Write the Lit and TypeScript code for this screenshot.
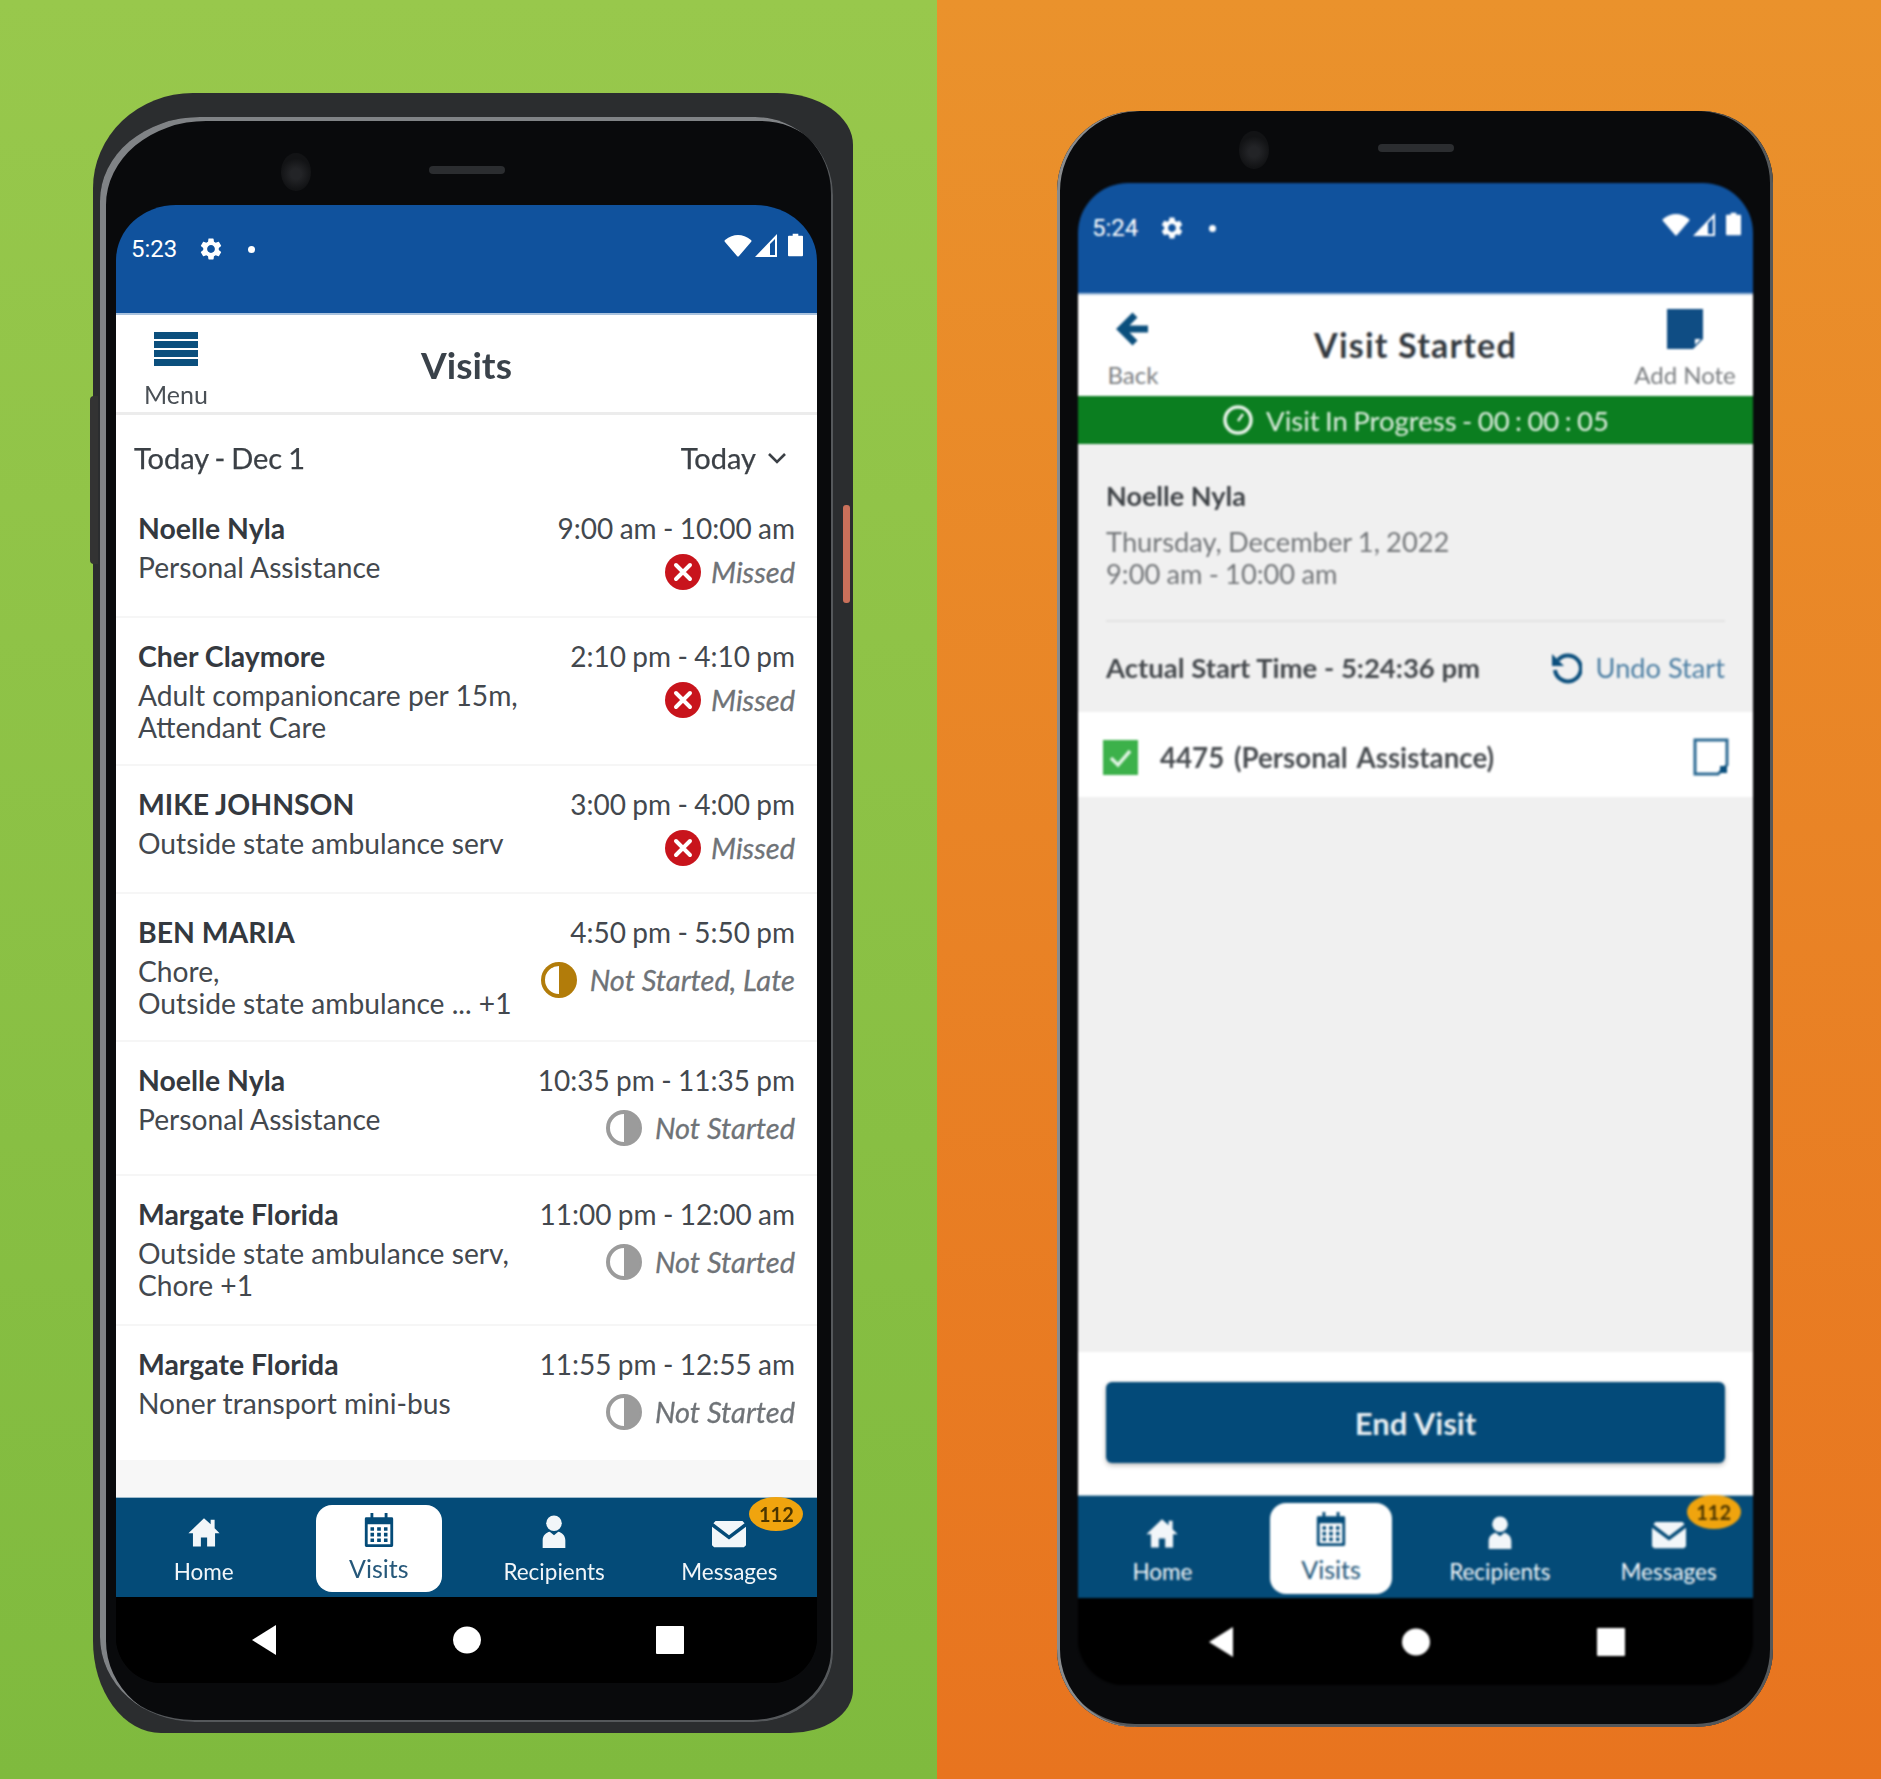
import { LitElement, html, css, svg } from "lit";
import { customElement, property } from "lit/decorators.js";

const gear = svg`<path d="M19.14 12.94c.04-.3.06-.61.06-.94 0-.32-.02-.64-.07-.94l2.03-1.58a.49.49 0 0 0 .12-.61l-1.92-3.32a.488.488 0 0 0-.59-.22l-2.39.96c-.5-.38-1.03-.7-1.62-.94l-.36-2.54a.484.484 0 0 0-.48-.41h-3.84c-.24 0-.43.17-.47.41l-.36 2.54c-.59.24-1.13.57-1.62.94l-2.39-.96c-.22-.08-.47 0-.59.22L2.74 8.87c-.12.21-.08.47.12.61l2.03 1.58c-.05.3-.09.63-.09.94s.02.64.07.94l-2.03 1.58a.49.49 0 0 0-.12.61l1.92 3.32c.12.22.37.29.59.22l2.39-.96c.5.38 1.03.7 1.62.94l.36 2.54c.05.24.24.41.48.41h3.84c.24 0 .44-.17.47-.41l.36-2.54c.59-.24 1.13-.56 1.62-.94l2.39.96c.22.08.47 0 .59-.22l1.92-3.32c.12-.22.07-.47-.12-.61l-2.01-1.58zM12 15.6c-1.98 0-3.6-1.62-3.6-3.6s1.62-3.6 3.6-3.6 3.6 1.62 3.6 3.6-1.62 3.6-3.6 3.6z"/>`;

@customElement("status-bar")
class StatusBar extends LitElement {
  @property() time = "";
  static styles = css`
    :host { display: flex; height: 100%; align-items: flex-start; color: #fff; font-family: Roboto, sans-serif; }
    .time { font-size: 24px; line-height: 32px; width: 47px; }
    .gear { width: 26px; height: 26px; fill: #fff; margin: 3px 0 0 20px; }
    .dot { width: 7px; height: 7px; border-radius: 50%; background: #fff; margin: 13px 0 0 24px; }
    .right { margin-left: auto; display: flex; gap: 2px; align-items: flex-start; }
    .wifi { width: 28px; height: 24px; fill: #fff; }
    .sig { width: 24px; height: 24px; fill: #fff; }
    .bat { width: 15px; height: 24px; fill: #fff; margin-left: 8px; }
  `;
  render() {
    return html`
      <span class="time">${this.time}</span>
      <svg class="gear" viewBox="0 0 24 24">${gear}</svg>
      <span class="dot"></span>
      <span class="right">
        <svg class="wifi" viewBox="0 0 28 24"><path d="M1 9Q0 8 1 7 14-3 27 7 28 8 27 9L15 23Q14 24 13 23Z"/></svg>
        <svg class="sig" viewBox="0 0 24 24"><path fill-rule="evenodd" d="M23 1V24H1ZM21 6 16 11V22H21Z"/></svg>
        <svg class="bat" viewBox="0 0 16 24"><path d="M5 0h6v2h4a1 1 0 0 1 1 1v20a1 1 0 0 1-1 1H1a1 1 0 0 1-1-1V3a1 1 0 0 1 1-1h4z"/></svg>
      </span>`;
  }
}

@customElement("bottom-nav")
class BottomNav extends LitElement {
  @property() variant = "a";
  static styles = css`
    :host { display: block; font-family: Lato, sans-serif; flex: none; }
    .bar { display: grid; grid-template-columns: repeat(4, 1fr); background: #044b78; border-top: 1px solid #9fbccd; box-sizing: border-box; justify-items: center; }
    .a .bar { height: 100px; padding-top: 7px; }
    .b .bar { height: 103px; padding-top: 7px; }
    .tab { position: relative; border-radius: 16px; box-sizing: border-box; display: flex; flex-direction: column; align-items: center; color: #f2f6f9; }
    .a .tab { width: 126px; height: 87px; padding-top: 8px; }
    .b .tab { width: 122px; height: 91px; padding-top: 11px; }
    .a .tab.on { padding-top: 7px; }
    .b .tab.on { padding-top: 8px; }
    .tab.on { background: #fff; color: #26587a; }
    .tab svg { width: 34px; height: 36px; fill: currentColor; display: block; }
    .tab.on svg { fill: #044b78; }
    .tab span { font-size: 22.500px; line-height: 28px; white-space: nowrap; }
    .a .tab span { margin-top: 9px; }
    .b .tab span { margin-top: 8px; }
    .a .tab.on span { margin-top: 6px; }
    .tab.on span { font-size: 25px; }
    .badge { position: absolute; right: -11px; top: -8px; width: 54px; height: 34px; border-radius: 50%; background: #f0a40e; color: #4a3500; font-size: 20px; font-weight: 700; line-height: 34px; text-align: center; }
    .keys { display: grid; justify-content: center; justify-items: center; align-items: center; background: #000; box-sizing: border-box; }
    .a .keys { grid-template-columns: repeat(3, 203px); height: 86px; }
    .b .keys { grid-template-columns: repeat(3, 195px); height: 87px; }
    .keys svg { width: 28px; height: 30px; fill: #fff; display: block; }
  `;
  render() {
    return html`
      <div class=${this.variant}>
        <div class="bar">
          <div class="tab">
            <svg viewBox="0 0 24 24"><path d="M12 3 1 13.5h3.2V23h5.6v-6.5h4.4V23h5.6v-9.500H23L19.500 10V4h-2.800v3.300Z"/></svg>
            <span>Home</span>
          </div>
          <div class="tab on">
            <svg viewBox="0 0 24 24"><path fill-rule="evenodd" d="M6 0h2v3h8V0h2v3h3a1 1 0 0 1 1 1v19a1 1 0 0 1-1 1H3a1 1 0 0 1-1-1V4a1 1 0 0 1 1-1h3zM4 8v14h16V8zM6 10h2.500v2.500H6zm4.700 0h2.600v2.500h-2.600zm4.800 0H18v2.500h-2.500zM6 14h2.500v2.500H6zm4.700 0h2.600v2.500h-2.600zm4.800 0H18v2.500h-2.500zM6 18h2.500v2.500H6zm4.700 0h2.600v2.500h-2.600zm4.800 0H18v2.500h-2.500z"/></svg>
            <span>Visits</span>
          </div>
          <div class="tab">
            <svg viewBox="0 0 24 24"><circle cx="12" cy="6.500" r="5.500"/><path d="M4 24v-5.500C4 15 6.500 13 9 12.500l3 2.500 3-2.500c2.500.5 5 2.500 5 6V24Z"/></svg>
            <span>Recipients</span>
          </div>
          <div class="tab">
            <svg viewBox="0 0 24 24"><path d="M1 5.500 2.500 4h19L23 5.500 12 14ZM0 8l12 9 12-9v13l-1.500 1.500h-21L0 21Z" transform="translate(0 1)"/></svg>
            <span>Messages</span>
            <div class="badge">112</div>
          </div>
        </div>
        <div class="keys">
          <svg viewBox="0 0 28 30"><path d="M26 0V30L2 15Z"/></svg>
          <svg viewBox="0 0 28 30"><ellipse cx="14" cy="15" rx="14" ry="13.500"/></svg>
          <svg viewBox="0 0 28 30"><rect y="1" width="28" height="28" rx="1"/></svg>
        </div>
      </div>`;
  }
}

interface Visit { name: string; sub: string[]; time: string; status: "missed" | "late" | "none"; h: number; }

const visits: Visit[] = [
  { name: "Noelle Nyla", sub: ["Personal Assistance"], time: "9:00 am - 10:00 am", status: "missed", h: 128 },
  { name: "Cher Claymore", sub: ["Adult companioncare per 15m,", "Attendant Care"], time: "2:10 pm - 4:10 pm", status: "missed", h: 148 },
  { name: "MIKE JOHNSON", sub: ["Outside state ambulance serv"], time: "3:00 pm - 4:00 pm", status: "missed", h: 128 },
  { name: "BEN MARIA", sub: ["Chore,", "Outside state ambulance ... +1"], time: "4:50 pm - 5:50 pm", status: "late", h: 148 },
  { name: "Noelle Nyla", sub: ["Personal Assistance"], time: "10:35 pm - 11:35 pm", status: "none", h: 134 },
  { name: "Margate Florida", sub: ["Outside state ambulance serv,", "Chore +1"], time: "11:00 pm - 12:00 am", status: "none", h: 150 },
  { name: "Margate Florida", sub: ["Noner transport mini-bus"], time: "11:55 pm - 12:55 am", status: "none", h: 134 },
];

const statusLabel = { missed: "Missed", late: "Not Started, Late", none: "Not Started" };

@customElement("visits-screen")
class VisitsScreen extends LitElement {
  static styles = css`
    :host { display: block; font-family: Lato, sans-serif; color: #3b4046; }
    .head { height: 100px; background: #fff; border-bottom: 3px solid #ececec; box-sizing: border-box; display: grid; grid-template-columns: 1fr auto 1fr; align-items: center; }
    .menu { display: flex; flex-direction: column; align-items: center; width: 64px; margin-left: 28px; align-self: start; padding-top: 17px; color: #4a5056; font-size: 25px; line-height: 30px; }
    .menu svg { width: 44px; height: 34px; margin-bottom: 13px; }
    .title { font-size: 37px; font-weight: 700; color: #3a424a; padding-top: 2px; }
    .date { height: 75px; display: flex; align-items: center; justify-content: space-between; padding: 10px 30px 0 18px; font-size: 29px; word-spacing: -1.5px; background: #fff; box-sizing: border-box; -webkit-text-stroke: .25px #3b4046; }
    .today { display: flex; align-items: center; gap: 11px; }
    .today svg { width: 20px; height: 14px; }
    .rows { background: #fff; }
    .row { display: flex; justify-content: space-between; padding: 18px 22px 0 22px; border-bottom: 2px solid #f6f6f6; box-sizing: border-box; }
    .row:last-child { border-bottom: 0; }
    .name { font-size: 28.400px; line-height: 40px; font-weight: 700; color: #34393f; }
    .sub { font-size: 28.200px; line-height: 32px; margin-top: 3px; white-space: nowrap; color: #43484e; }
    .right { display: flex; flex-direction: column; align-items: flex-end; }
    .time { font-size: 28px; line-height: 40px; color: #43484e; word-spacing: -.8px; }
    .st { display: flex; align-items: center; gap: 13px; font-size: 29px; line-height: 40px; font-style: italic; color: #6f7377; margin-top: 8px; -webkit-text-stroke: .3px #6f7377; }
    .st.missed { margin-top: 4px; gap: 10px; }
    .st svg { width: 36px; height: 36px; display: block; }
    .foot { height: 37px; background: #f7f7f7; }
  `;
  icon(s: Visit["status"]) {
    if (s === "missed") {
      return html`<svg viewBox="0 0 36 36"><circle cx="18" cy="18" r="18" fill="#c8141c"/><path d="M11 11 25 25M25 11 11 25" stroke="#fff" stroke-width="4" stroke-linecap="round"/></svg>`;
    }
    const c = s === "late" ? "#b27c0a" : "#9b9b9b";
    return html`<svg viewBox="0 0 36 36"><circle cx="18" cy="18" r="16" fill="#fff" stroke=${c} stroke-width="4"/><path d="M18 2a16 16 0 0 1 0 32Z" fill=${c}/></svg>`;
  }
  render() {
    return html`
      <div class="head">
        <div class="menu">
          <svg viewBox="0 0 44 34"><path fill="#0b4f7d" d="M0 0h44v7H0zM0 9h44v7H0zM0 18h44v7H0zM0 27h44v7H0z"/></svg>
          Menu
        </div>
        <div class="title">Visits</div>
      </div>
      <div class="date">
        <span>Today - Dec 1</span>
        <span class="today">Today
          <svg viewBox="0 0 20 14"><path d="M2 3l8 8 8-8" fill="none" stroke="#3b4046" stroke-width="2.600"/></svg>
        </span>
      </div>
      <div class="rows">
        ${visits.map((v) => html`
          <div class="row" style="height:${v.h}px">
            <div>
              <div class="name">${v.name}</div>
              <div class="sub">${v.sub.map((l) => html`<div>${l}</div>`)}</div>
            </div>
            <div class="right">
              <div class="time">${v.time}</div>
              <div class="st ${v.status}">${this.icon(v.status)}<span>${statusLabel[v.status]}</span></div>
            </div>
          </div>`)}
      </div>
      <div class="foot"></div>`;
  }
}

@customElement("started-screen")
class StartedScreen extends LitElement {
  static styles = css`
    :host { display: flex; flex-direction: column; height: 100%; font-family: Lato, sans-serif; color: #3a3f44; }
    .head { height: 101px; background: #fff; display: grid; grid-template-columns: 1fr auto 1fr; align-items: center; box-sizing: border-box; flex: none; }
    .act { display: flex; flex-direction: column; align-items: center; align-self: start; padding-top: 14px; font-size: 24px; line-height: 30px; color: #7b7e81; width: 52px; margin-left: 29px; white-space: nowrap; }
    .act.r { justify-self: end; width: 100px; margin: 0 18px 0 0; }
    .act svg { display: block; height: 40px; margin-bottom: 11px; }
    .title { font-size: 34px; font-weight: 700; letter-spacing: 1.2px; color: #33393f; padding-bottom: 2px; }
    .bar { height: 48px; flex: none; background: #0b7e20; display: flex; align-items: center; justify-content: center; gap: 12px; color: #dfeee0; font-size: 27.500px; white-space: nowrap; word-spacing: -1.6px; }
    .bar svg { width: 32px; height: 32px; }
    .info { flex: 1; background: #f0f0f0; display: flex; flex-direction: column; }
    .pad { padding: 34px 28px 0; }
    .nm { font-size: 27px; line-height: 36px; font-weight: 700; color: #3f4347; }
    .dt { font-size: 27.300px; line-height: 32px; color: #74777a; margin-top: 12px; word-spacing: -.8px; }
    hr { border: 0; height: 2px; background: #e2e2e2; margin: 30px 0 0; }
    .act-row { display: flex; justify-content: space-between; align-items: center; height: 90px; }
    .start { font-size: 27.500px; font-weight: 700; color: #45494d; }
    .undo { display: flex; align-items: center; gap: 14px; font-size: 27.200px; color: #4b7ea3; }
    .undo svg { width: 32px; height: 34px; }
    .svc { height: 85px; background: #fff; display: flex; align-items: center; padding: 5px 24px 0 25px; box-sizing: border-box; font-size: 27.700px; font-weight: 700; color: #4a4e52; word-spacing: 3px; }
    .svc .chk { width: 35px; height: 35px; margin-right: 22px; }
    .svc .nt { width: 36px; height: 38px; margin-left: auto; }
    .cta { height: 143px; flex: none; background: #fff; padding: 30px 28px 0; box-sizing: border-box; }
    .btn { height: 81px; border-radius: 6px; background: #034a79; box-shadow: 0 2px 5px rgba(0,0,0,.3); color: #e8eff3; font-size: 31px; font-weight: 700; display: flex; align-items: center; justify-content: center; }
  `;
  render() {
    return html`
      <div class="head">
        <div class="act">
          <svg viewBox="0 0 36 40" width="36"><path d="M33 20H8M20 6 6 20l14 14" fill="none" stroke="#0b4f7d" stroke-width="7"/></svg>
          Back
        </div>
        <div class="title">Visit Started</div>
        <div class="act r">
          <svg viewBox="0 0 36 40" width="36"><path fill="#0f4d84" d="M0 0h36v30L26 40H0zM28 30v6l6-6z"/></svg>
          Add Note
        </div>
      </div>
      <div class="bar">
        <svg viewBox="0 0 32 32"><circle cx="16" cy="16" r="13" fill="none" stroke="#e9f4ea" stroke-width="3.500"/><path d="M16 17l5-7" stroke="#e9f4ea" stroke-width="2.500" fill="none"/></svg>
        Visit In Progress - 00 : 00 : 05
      </div>
      <div class="info">
        <div class="pad">
          <div class="nm">Noelle Nyla</div>
          <div class="dt">Thursday, December 1, 2022<br />9:00 am - 10:00 am</div>
          <hr />
          <div class="act-row">
            <span class="start">Actual Start Time - 5:24:36 pm</span>
            <span class="undo">
              <svg viewBox="0 0 32 34"><path d="M8 10a13 13 0 1 1-3 10" fill="none" stroke="#0b4f7d" stroke-width="4"/><path d="M2 4v12h12z" fill="#0b4f7d"/></svg>
              Undo Start
            </span>
          </div>
        </div>
        <div class="svc">
          <svg class="chk" viewBox="0 0 35 35"><rect width="35" height="35" fill="#3cb14a"/><path d="M8 18l7 7 12-14" fill="none" stroke="#dff3e2" stroke-width="3.500"/></svg>
          4475 (Personal Assistance)
          <svg class="nt" viewBox="0 0 36 38"><path d="M2 2h32v25l-9 9H2z" fill="#fff" stroke="#2c6a93" stroke-width="3"/><path d="M27 28h7v7h-7z" fill="#0b4f7d"/></svg>
        </div>
      </div>
      <div class="cta"><div class="btn">End Visit</div></div>
      <bottom-nav variant="b"></bottom-nav>`;
  }
}

@customElement("app-root")
class AppRoot extends LitElement {
  static styles = css`
    :host { display: grid; grid-template-columns: 937px 944px; height: 1779px; overflow: hidden; }
    .panel { box-sizing: border-box; }
    .green { background: linear-gradient(#98c84c, #7fba3e); padding: 93px 0 0 93px; }
    .orange { background: linear-gradient(#ea922c, #e8741f); padding: 111px 0 0 120px; }

    .case { position: relative; width: 760px; height: 1640px; box-sizing: border-box; padding: 24px 0 0 7px; background: #2b2d2f; border-radius: 100px 76px 63px 68px / 95px 52px 43px 92px; }
    .case::before { content: ""; position: absolute; left: -3px; top: 303px; width: 8px; height: 168px; background: #333; border-radius: 4px 0 0 4px; }
    .case::after { content: ""; position: absolute; right: 3px; top: 412px; width: 7px; height: 98px; background: #c9705a; border-radius: 3px; }

    .bezel { position: relative; box-sizing: border-box; background: #090a0c; }
    .left { width: 733px; height: 1605px; padding: 88px 0 0 16px; border-radius: 100px 78px 80px 95px / 84px 78px 70px 85px; box-shadow: inset 6px 4px 0 #808386, inset -2px -2px 0 #55585b; }
    .right { width: 716px; height: 1616px; padding: 72px 0 0 21px; border-radius: 80px 72px 78px 78px; box-shadow: inset 3px 0 0 #8a8c8e, inset -3px 0 0 #55585a, inset 0 -3px 0 #54575a; }

    .cam { position: absolute; width: 30px; height: 38px; border-radius: 50%; background: radial-gradient(circle at 50% 55%, #232427 0 20%, #121315 60%); }
    .spk { position: absolute; width: 76px; height: 8px; border-radius: 4px; background: #2b2d30; }
    .left .cam { left: 181px; top: 36px; }
    .left .spk { left: 329px; top: 49px; }
    .right .cam { left: 182px; top: 20px; }
    .right .spk { left: 321px; top: 33px; }

    .screen { overflow: hidden; background: #000; display: flex; flex-direction: column; }
    .s1 { width: 701px; height: 1478px; border-radius: 60px 62px 46px 46px / 55px 56px 46px 46px; filter: blur(.45px); }
    .s2 { width: 675px; height: 1502px; border-radius: 50px 50px 46px 46px; filter: blur(.8px); }
    .blue { background: #10529d; box-sizing: border-box; flex: none; border-bottom: 2px solid #a9c2dd; }
    .s1 .blue { height: 110px; padding: 28px 14px 0 15px; }
    .s2 .blue { height: 112px; padding: 29px 12px 0 14px; }
    started-screen { flex: 1; min-height: 0; }
  `;
  render() {
    return html`
      <div class="panel green">
        <div class="case">
          <div class="bezel left">
            <div class="cam"></div><div class="spk"></div>
            <div class="screen s1">
              <div class="blue"><status-bar time="5:23"></status-bar></div>
              <visits-screen></visits-screen>
              <bottom-nav variant="a"></bottom-nav>
            </div>
          </div>
        </div>
      </div>
      <div class="panel orange">
        <div class="bezel right">
          <div class="cam"></div><div class="spk"></div>
          <div class="screen s2">
            <div class="blue"><status-bar time="5:24"></status-bar></div>
            <started-screen></started-screen>
          </div>
        </div>
      </div>`;
  }
}
